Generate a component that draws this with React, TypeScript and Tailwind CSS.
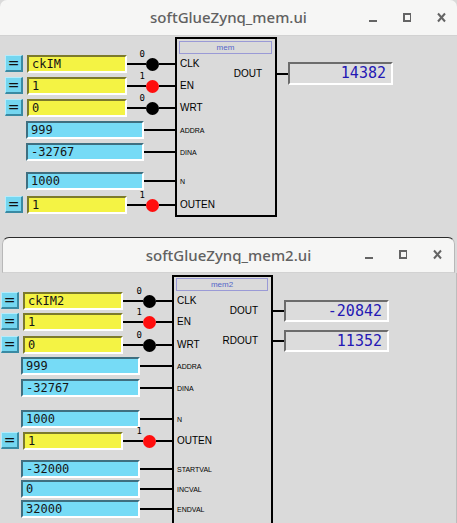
import React from 'react';

type Row = {
  label: string;
  small?: boolean;
  kind: 'y' | 'c';
  value: string;
  led?: 'k' | 'r';
  bit?: string;
  mt: string;
};

type Out = { label: string; value: string; mt: string; h: string };

const mono = "font-['DejaVu_Sans_Mono',monospace]";
const sans = "font-['Liberation_Sans',Arial,sans-serif]";

const mem1Rows: Row[] = [
  { label: 'CLK', kind: 'y', value: 'ckIM', led: 'k', bit: '0', mt: 'mt-[1px]' },
  { label: 'EN', kind: 'y', value: '1', led: 'r', bit: '1', mt: 'mt-[4px]' },
  { label: 'WRT', kind: 'y', value: '0', led: 'k', bit: '0', mt: 'mt-[4px]' },
  { label: 'ADDRA', small: true, kind: 'c', value: '999', mt: 'mt-[4px]' },
  { label: 'DINA', small: true, kind: 'c', value: '-32767', mt: 'mt-[4px]' },
  { label: 'N', small: true, kind: 'c', value: '1000', mt: 'mt-[11px]' },
  { label: 'OUTEN', kind: 'y', value: '1', led: 'r', bit: '1', mt: 'mt-[6px]' },
];

const mem2Rows: Row[] = [
  { label: 'CLK', kind: 'y', value: 'ckIM2', led: 'k', bit: '0', mt: 'mt-[1px]' },
  { label: 'EN', kind: 'y', value: '1', led: 'r', bit: '1', mt: 'mt-[3px]' },
  { label: 'WRT', kind: 'y', value: '0', led: 'k', bit: '0', mt: 'mt-[5px]' },
  { label: 'ADDRA', small: true, kind: 'c', value: '999', mt: 'mt-[3px]' },
  { label: 'DINA', small: true, kind: 'c', value: '-32767', mt: 'mt-[4px]' },
  { label: 'N', small: true, kind: 'c', value: '1000', mt: 'mt-[13px]' },
  { label: 'OUTEN', kind: 'y', value: '1', led: 'r', bit: '1', mt: 'mt-[4px]' },
  { label: 'STARTVAL', small: true, kind: 'c', value: '-32000', mt: 'mt-[10px]' },
  { label: 'INCVAL', small: true, kind: 'c', value: '0', mt: 'mt-[2px]' },
  { label: 'ENDVAL', small: true, kind: 'c', value: '32000', mt: 'mt-[2px]' },
];

const mem1Outs: Out[] = [{ label: 'DOUT', value: '14382', mt: 'mt-[8px]', h: 'h-[23px]' }];
const mem2Outs: Out[] = [
  { label: 'DOUT', value: '-20842', mt: 'mt-[9px]', h: 'h-[22px]' },
  { label: 'RDOUT', value: '11352', mt: 'mt-[8px]', h: 'h-[22px]' },
];

function Controls({ pad }: { pad: string }) {
  return (
    <div className={`flex items-center justify-end gap-[26px] ${pad}`}>
      <svg width="8" height="16" viewBox="0 0 8 16">
        <path d="M0 11h8" stroke="#646464" strokeWidth="2" />
      </svg>
      <svg width="8" height="16" viewBox="0 0 8 16">
        <rect x="1" y="4" width="7" height="7" fill="none" stroke="#646464" strokeWidth="2" />
      </svg>
      <svg width="9" height="16" viewBox="0 0 9 16">
        <path d="M1 3.5l7 8M8 3.5l-7 8" stroke="#646464" strokeWidth="2" />
      </svg>
    </div>
  );
}

function TitleBar({ title, outer, pad }: { title: string; outer: string; pad: string }) {
  return (
    <div className={`shrink-0 grid grid-cols-[1fr_auto_1fr] items-center h-[36px] bg-[#f6f6f5] rounded-t-[7px] ${outer}`}>
      <div />
      <div className="font-['Noto_Sans',sans-serif] text-[15px] font-medium text-[#616161]">{title}</div>
      <Controls pad={pad} />
    </div>
  );
}

function Connector({ led, bit }: { led?: 'k' | 'r'; bit?: string }) {
  return (
    <div className="flex-1 flex items-center">
      <div className="flex-1 h-[2px] bg-black" />
      {led && (
        <>
          <div className={`relative w-[13px] h-[13px] rounded-full ${led === 'r' ? 'bg-[#ff0e0e]' : 'bg-black'}`}>
            <span className={`absolute right-[calc(100%+1px)] -top-[8px] text-[9px] leading-none text-black ${mono}`}>{bit}</span>
          </div>
          <div className="w-[16px] h-[2px] bg-black" />
        </>
      )}
    </div>
  );
}

function InputRow({ row, yPad, cPad, cW }: { row: Row; yPad: string; cPad: string; cW: string }) {
  if (row.kind === 'y') {
    return (
      <div className={`flex h-[18px] items-stretch ${yPad} ${row.mt}`}>
        <div className="w-[18px] h-[17px] flex items-center justify-center bg-[#74d6f0] border border-r-2 border-b-2 border-t-[#b5ecfb] border-l-[#b5ecfb] border-r-[#3a8aa3] border-b-[#3a8aa3] text-[14px] leading-none text-[#111] font-['DejaVu_Sans',sans-serif]">
          =
        </div>
        <div className={`ml-[4px] w-[100px] flex items-center pl-[3px] bg-[#f4f344] border-2 border-t-[#7c7a2c] border-l-[#7c7a2c] border-b-white border-r-white text-[12px] leading-none text-[#151515] ${mono}`}>
          {row.value}
        </div>
        <Connector led={row.led} bit={row.bit} />
      </div>
    );
  }
  return (
    <div className={`flex h-[18px] items-stretch ${cPad} ${row.mt}`}>
      <div className={`${cW} flex items-center pl-[3px] bg-[#76dbf6] border-2 border-t-[#3f6f80] border-l-[#3f6f80] border-b-white border-r-white text-[12px] leading-none text-[#151515] ${mono}`}>
        {row.value}
      </div>
      <Connector />
    </div>
  );
}

type PanelProps = {
  name: string;
  rows: Row[];
  outs: Out[];
  leftW: string;
  yPad: string;
  cPad: string;
  cW: string;
  boxW: string;
  boxH: string;
  boxMt: string;
  tagMt: string;
};

function Panel(p: PanelProps) {
  return (
    <div className="flex items-start">
      {/* inputs */}
      <div className={`${p.leftW} shrink-0 pt-[18px] flex flex-col`}>
        {p.rows.map((r) => (
          <InputRow key={r.label} row={r} yPad={p.yPad} cPad={p.cPad} cW={p.cW} />
        ))}
      </div>

      {/* block */}
      <div className={`${p.boxW} ${p.boxH} ${p.boxMt} shrink-0 border-2 border-black flex flex-col`}>
        <div className={`${p.tagMt} ml-[2px] mr-[3px] h-[13px] shrink-0 border border-[#9a9ad6] flex items-center justify-center text-[8px] leading-none text-[#5566c8] ${sans}`}>
          {p.name}
        </div>
        <div className="flex">
          <div className="flex-1 flex flex-col">
            {p.rows.map((r) => (
              <div
                key={r.label}
                className={`h-[18px] flex items-center pl-[3px] text-black leading-none ${sans} ${r.small ? 'text-[7px]' : 'text-[10px]'} ${r.mt}`}
              >
                {r.label}
              </div>
            ))}
          </div>
          <div className="flex flex-col pr-[13px]">
            {p.outs.map((o) => (
              <div key={o.label} className={`${o.h} ${o.mt} flex items-center justify-end text-[10px] leading-none text-black ${sans}`}>
                {o.label}
              </div>
            ))}
          </div>
        </div>
      </div>

      {/* outputs */}
      <div className="pt-[18px] flex flex-col">
        {p.outs.map((o) => (
          <div key={o.label} className={`flex items-center ${o.h} ${o.mt}`}>
            <div className="w-[11px] h-[2px] bg-black" />
            <div className={`w-[105px] h-full flex items-center justify-end pr-[5px] bg-[#dcdcdc] border-2 border-t-[#6c6c6c] border-l-[#6c6c6c] border-b-white border-r-white text-[15px] leading-none text-[#2418b4] ${mono}`}>
              {o.value}
            </div>
          </div>
        ))}
      </div>
    </div>
  );
}

export default function App() {
  return (
    <div className="w-[457px] h-[523px] overflow-hidden bg-[#dadada] flex flex-col">
      {/* window 1 */}
      <TitleBar title="softGlueZynq_mem.ui" outer="border-b border-[#d2d2d2]" pad="pr-[11px]" />
      <div className="h-[201px] shrink-0 bg-[#dadada]">
        <Panel
          name="mem"
          rows={mem1Rows}
          outs={mem1Outs}
          leftW="w-[175px]"
          yPad="pl-[5px]"
          cPad="pl-[26px]"
          cW="w-[118px]"
          boxW="w-[102px]"
          boxH="h-[180px]"
          boxMt="mt-[1px]"
          tagMt="mt-[2px]"
        />
      </div>

      {/* window 2 */}
      <TitleBar
        title="softGlueZynq_mem2.ui"
        outer="mx-[2px] border-t border-x border-t-[#2b2b2b] border-x-[#b8b8b8] border-b border-b-[#d2d2d2]"
        pad="pr-[12px]"
      />
      <div className="flex-1 min-h-0 bg-[#dadada] border-r border-[#bdbdbd]">
        <Panel
          name="mem2"
          rows={mem2Rows}
          outs={mem2Outs}
          leftW="w-[172px]"
          yPad="pl-[1px]"
          cPad="pl-[21px]"
          cW="w-[119px]"
          boxW="w-[101px]"
          boxH="h-[260px]"
          boxMt="mt-[2px]"
          tagMt="mt-[1px]"
        />
      </div>
    </div>
  );
}
